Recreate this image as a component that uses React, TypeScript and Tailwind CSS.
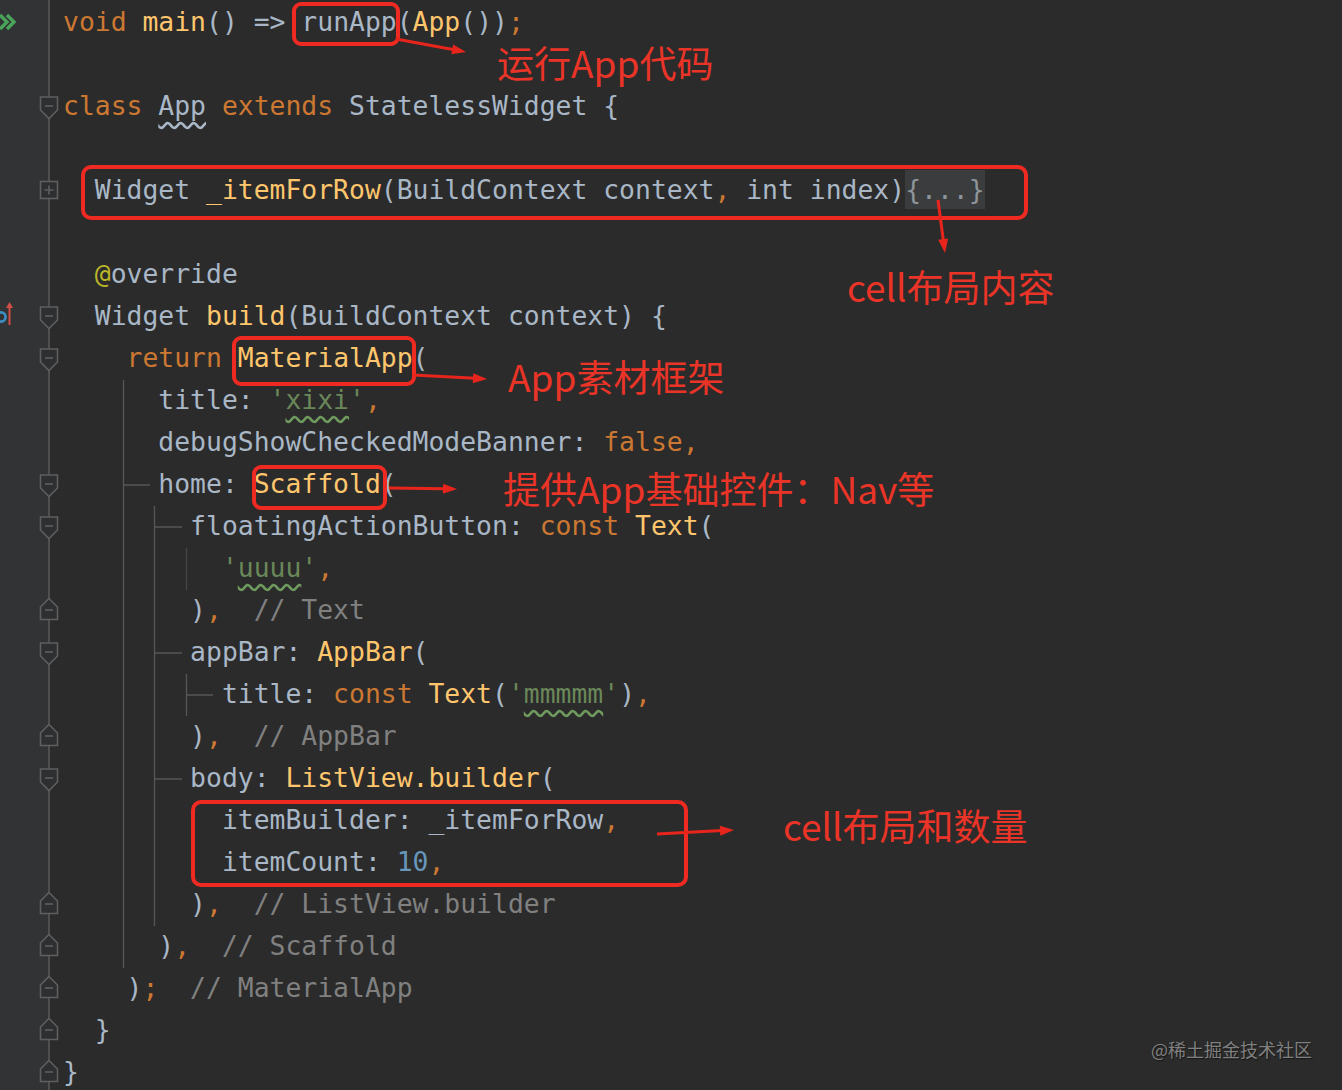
import React from 'react';

// colours of the Darcula scheme
const D = 'text-[#a9b7c6]';
const K = 'text-[#cc7832]';
const F = 'text-[#ffc66d]';
const S = 'text-[#6a8759]';
const N = 'text-[#6897bb]';
const C = 'text-[#808080]';
const A = 'text-[#bbb529]';

type Tok = { s: string; c: string; kind?: 'wavy' | 'wavyGrey' | 'fold' | 'box'; box?: string };

const t = (s: string, c: string = D, kind?: Tok['kind'], box?: string): Tok => ({ s, c, kind, box });

const lines: Tok[][] = [
  [t('void', K), t(' '), t('main', F), t('() => '), t('runApp', D, 'box', 'top-[1px] -bottom-[3px] -left-[9px] -right-[3px]'), t('('), t('App', F), t('())'), t(';', K)],
  [],
  [t('class', K), t(' '), t('App', D, 'wavyGrey'), t(' '), t('extends', K), t(' StatelessWidget {')],
  [],
  [t('  Widget '), t('_itemForRow', F), t('(BuildContext context'), t(',', K), t(' int index)'), t('{...}', 'text-[#8d949a]', 'fold')],
  [],
  [t('  '), t('@', A), t('override')],
  [t('  Widget '), t('build', F), t('(BuildContext context) {')],
  [t('    '), t('return', K), t(' '), t('MaterialApp', F, 'box', '-top-[1px] -bottom-[7px] -left-[6px] -right-[3px]'), t('(')],
  [t('      title: '), t("'", S), t('xixi', S, 'wavy'), t("'", S), t(',', K)],
  [t('      debugShowCheckedModeBanner: '), t('false', K), t(',', K)],
  [t('      home: '), t('Scaffold', F, 'box', 'top-[2px] -bottom-[5px] -left-[2px] -right-[6px]'), t('(')],
  [t('        floatingActionButton: '), t('const', K), t(' '), t('Text', F), t('(')],
  [t("          '", S), t('uuuu', S, 'wavy'), t("'", S), t(',', K)],
  [t('        )'), t(',', K), t('  // Text', C)],
  [t('        appBar: '), t('AppBar', F), t('(')],
  [t('          title: '), t('const', K), t(' '), t('Text', F), t('('), t("'", S), t('mmmmm', S, 'wavy'), t("'", S), t(')'), t(',', K)],
  [t('        )'), t(',', K), t('  // AppBar', C)],
  [t('        body: '), t('ListView.builder', F), t('(')],
  [t('          itemBuilder: _itemForRow'), t(',', K)],
  [t('          itemCount: '), t('10', N), t(',', K)],
  [t('        )'), t(',', K), t('  // ListView.builder', C)],
  [t('      )'), t(',', K), t('  // Scaffold', C)],
  [t('    )'), t(';', K), t('  // MaterialApp', C)],
  [t('  }')],
  [t('}')],
];

const folds: Record<number, 'start' | 'end' | 'plus'> = {
  2: 'start',
  4: 'plus',
  7: 'start',
  8: 'start',
  11: 'start',
  12: 'start',
  14: 'end',
  15: 'start',
  17: 'end',
  18: 'start',
  21: 'end',
  22: 'end',
  23: 'end',
  24: 'end',
  25: 'end',
};

function FoldMark({ kind }: { kind: 'start' | 'end' | 'plus' }) {
  const stroke = '#5f5f5f';
  return (
    <svg className="absolute left-[39px] top-[8px]" width="20" height="28" viewBox="0 0 20 28">
      {kind === 'start' && <path d="M1.5 4 H18.5 V17 L10 25.5 L1.5 17 Z" fill="#2e2f30" stroke={stroke} strokeWidth="1.6" />}
      {kind === 'end' && <path d="M10 1.5 L18.5 10 V22.5 H1.5 V10 Z" fill="#2e2f30" stroke={stroke} strokeWidth="1.6" />}
      {kind === 'plus' && <rect x="1.5" y="4.5" width="17" height="17" fill="#2e2f30" stroke={stroke} strokeWidth="1.6" />}
      {kind === 'plus' ? (
        <path d="M5.5 13 H14.5 M10 8.5 V17.5" stroke={stroke} strokeWidth="1.6" />
      ) : (
        <path d="M6 13 H14" stroke={stroke} strokeWidth="1.6" />
      )}
    </svg>
  );
}

function GutterCell({ i }: { i: number }) {
  return (
    <div className="relative h-[42px]">
      {i === 0 && (
        <svg className="absolute left-0 top-[12px]" width="18" height="18" viewBox="0 0 18 18">
          <path d="M0 2 L7 9 L0 16 M7 2 L14 9 L7 16" stroke="#4aa35b" strokeWidth="3.4" fill="none" />
        </svg>
      )}
      {i === 7 && (
        <svg className="absolute left-0 top-[4px]" width="16" height="30" viewBox="0 0 16 30">
          <circle cx="1" cy="18" r="4.6" stroke="#3d90c6" strokeWidth="2.6" fill="none" />
          <path d="M9.5 26 V6" stroke="#d24f48" strokeWidth="2" />
          <path d="M6 9 L9.5 3 L13 9 Z" fill="#d24f48" />
        </svg>
      )}
      {folds[i] && <FoldMark kind={folds[i]} />}
    </div>
  );
}

function Token({ tok }: { tok: Tok }) {
  if (tok.kind === 'box') {
    return (
      <span className={`relative inline-block h-[42px] ${tok.c}`}>
        {tok.s}
        <span className={`absolute rounded-[9px] border-4 border-[#ee2a22] ${tok.box}`} />
      </span>
    );
  }
  if (tok.kind === 'wavy') {
    return <span className={`${tok.c} underline decoration-wavy decoration-[#6f9a5e] underline-offset-[6px]`}>{tok.s}</span>;
  }
  if (tok.kind === 'wavyGrey') {
    return <span className={`${tok.c} underline decoration-wavy decoration-[#a9b7c6] underline-offset-[6px]`}>{tok.s}</span>;
  }
  if (tok.kind === 'fold') {
    return <span className={`${tok.c} bg-[#3b3c3d] py-[4px]`}>{tok.s}</span>;
  }
  return <span className={tok.c}>{tok.s}</span>;
}

function Guides() {
  const g = '#575757';
  return (
    <svg className="pointer-events-none absolute inset-0" width="1342" height="1090">
      <path d="M123.5 380 V968 M123.5 485 H150" stroke={g} strokeWidth="1.3" fill="none" />
      <path d="M154.5 506 V926 M154.5 527 H182 M154.5 653 H182 M154.5 779 H182" stroke={g} strokeWidth="1.3" fill="none" />
      <path d="M186.5 548 V590" stroke="#464646" strokeWidth="1.3" fill="none" />
      <path d="M186.5 674 V716 M186.5 695 H213" stroke={g} strokeWidth="1.3" fill="none" />
    </svg>
  );
}

function arrow(x1: number, y1: number, x2: number, y2: number) {
  const dx = x2 - x1;
  const dy = y2 - y1;
  const len = Math.hypot(dx, dy);
  const ux = dx / len;
  const uy = dy / len;
  const bx = x2 - ux * 14;
  const by = y2 - uy * 14;
  const px = -uy * 5;
  const py = ux * 5;
  return (
    <g key={`${x1}-${y1}`}>
      <line x1={x1} y1={y1} x2={bx + ux * 2} y2={by + uy * 2} stroke="#e8251c" strokeWidth="3" />
      <polygon points={`${x2},${y2} ${bx + px},${by + py} ${bx - px},${by - py}`} fill="#e8251c" />
    </g>
  );
}

function Arrows() {
  return (
    <svg className="pointer-events-none absolute inset-0" width="1342" height="1090">
      {arrow(396, 39, 466, 52)}
      {arrow(938, 200, 945, 253)}
      {arrow(413, 375, 487, 379)}
      {arrow(389, 488, 457, 489)}
      {arrow(657, 834, 734, 830)}
    </svg>
  );
}

const notes = [
  { text: '运行App代码', cls: 'left-[497px] top-[47px]' },
  { text: 'cell布局内容', cls: 'left-[847px] top-[271px]' },
  { text: 'App素材框架', cls: 'left-[508px] top-[361px]' },
  { text: '提供App基础控件：Nav等', cls: 'left-[503px] top-[473px]' },
  { text: 'cell布局和数量', cls: 'left-[783px] top-[810px]' },
];

export default function App() {
  return (
    <div className="relative h-[1090px] w-[1342px] overflow-hidden bg-[#2b2b2b] font-['DejaVu_Sans_Mono',monospace]">
      <div className="flex h-full">
        <div className="w-[50px] shrink-0 border-r-2 border-[#4f4f4f] bg-[#313335] pt-px">
          {lines.map((_, i) => (
            <GutterCell key={i} i={i} />
          ))}
        </div>
        <div className="flex-1 pl-[13px] pt-px text-[26.4px] leading-[42px]">
          {lines.map((toks, i) => (
            <div key={i} className="relative h-[42px] whitespace-pre">
              {toks.map((tok, j) => (
                <Token key={j} tok={tok} />
              ))}
              {i === 4 && <span className="absolute -top-[4px] left-[18px] h-[55px] w-[947px] rounded-[10px] border-4 border-[#ee2a22]" />}
              {i === 19 && <span className="absolute top-[1px] left-[128px] h-[87px] w-[497px] rounded-[10px] border-4 border-[#ee2a22]" />}
            </div>
          ))}
        </div>
      </div>

      <Guides />
      <Arrows />

      {notes.map((n) => (
        <div
          key={n.text}
          className={`absolute ${n.cls} whitespace-nowrap font-['Noto_Sans_CJK_SC',sans-serif] text-[37px] leading-[30px] text-[#ea3427]`}
        >
          {n.text}
        </div>
      ))}

      <div className="absolute left-[1151px] top-[1040px] font-['Noto_Sans_CJK_SC',sans-serif] text-[18px] leading-none text-[#808080] [text-shadow:1px_1px_1px_#151515]">
        @稀土掘金技术社区
      </div>
    </div>
  );
}
